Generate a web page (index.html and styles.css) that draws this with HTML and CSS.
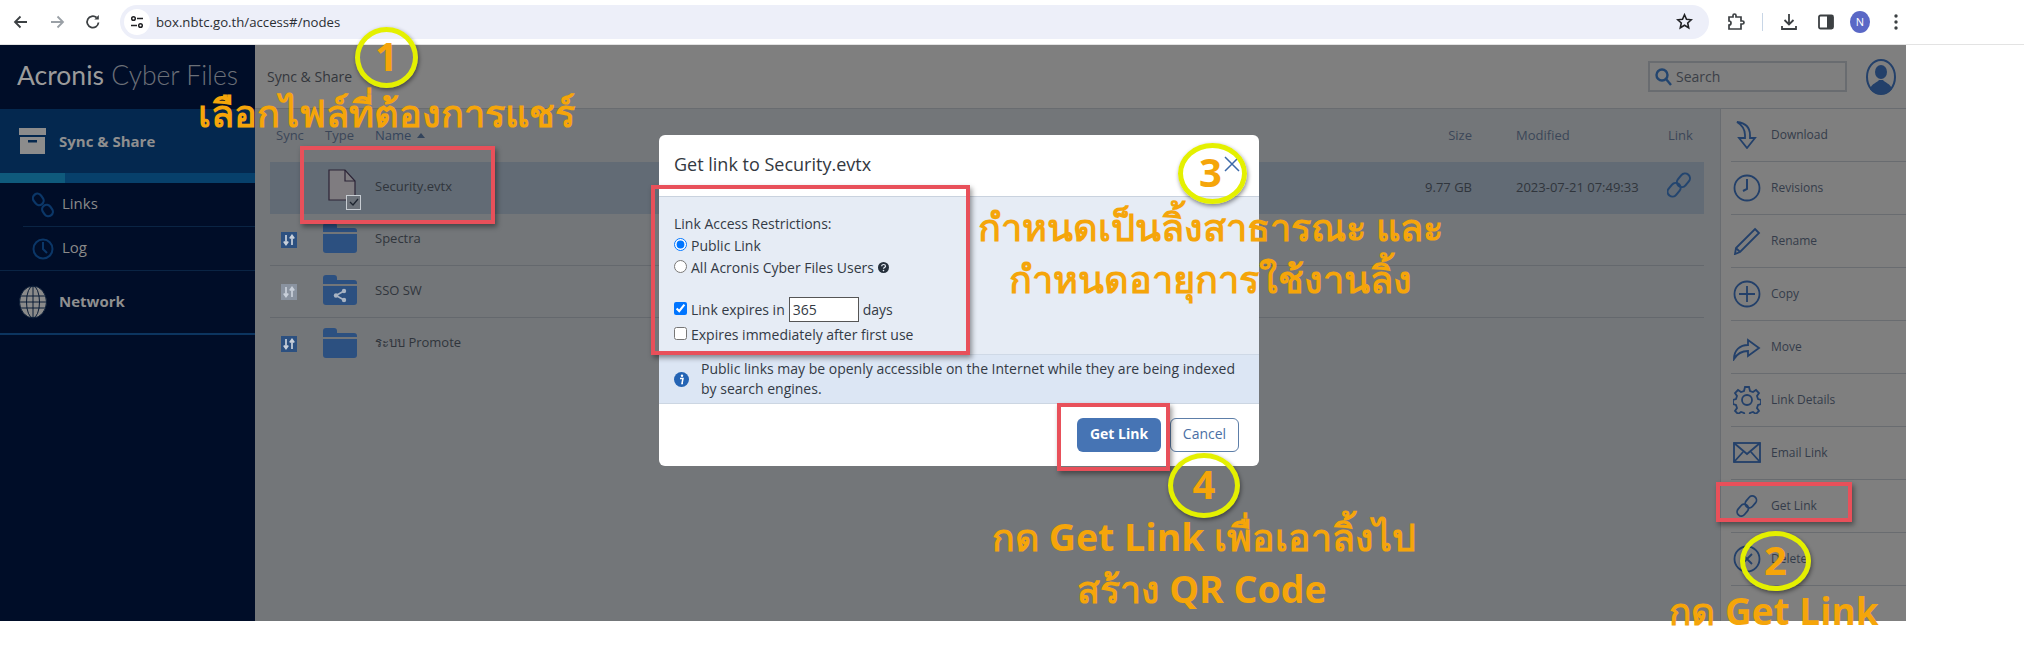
FILE: index.html
```html
<!DOCTYPE html>
<html lang="en">
<head>
    <meta charset="UTF-8">
    <title>Acronis Cyber Files</title>
    <link rel="stylesheet" href="styles.css">
</head>
<body>
    <svg class="defs" width="0" height="0">
        <symbol id="i-folder" viewBox="0 0 34 30">
            <path d="M0 3a3 3 0 0 1 3-3h8a3 3 0 0 1 3 3v2h17a3 3 0 0 1 3 3v1H0z" fill="#2c5080"/>
            <path d="M0 11h34v16a3 3 0 0 1-3 3H3a3 3 0 0 1-3-3z" fill="#2c5080"/>
        </symbol>
        <symbol id="i-sync" viewBox="0 0 16 16">
            <rect width="16" height="16" fill="currentColor"/>
            <path d="M5 3v9M2.800 9.500 5 12.500l2.200-3M11 13V4M8.800 6.500 11 3.500l2.200 3" fill="none" stroke="#c9d0da" stroke-width="1.700"/>
        </symbol>
        <symbol id="i-link" viewBox="0 0 26 30">
            <g fill="none" stroke="currentColor" stroke-width="2.200">
                <rect x="12.500" y="2" width="10.500" height="16" rx="5.200" transform="rotate(40 18 10)"/>
                <rect x="2.500" y="12" width="10.500" height="16" rx="5.200" transform="rotate(40 7.500 20)"/>
            </g>
        </symbol>
    </svg>

    <header class="browser">
        <div class="nav-btns">
            <svg width="16" height="16" viewBox="0 0 16 16" fill="none" stroke="#3c4043" stroke-width="1.800"><path d="M14 8H2M7.500 2.500 2 8l5.500 5.500"/></svg>
            <svg width="16" height="16" viewBox="0 0 16 16" fill="none" stroke="#9aa0a6" stroke-width="1.800"><path d="M2 8h12M8.500 2.500 14 8l-5.500 5.500"/></svg>
            <svg width="16" height="16" viewBox="0 0 16 16" fill="none" stroke="#3c4043" stroke-width="1.800"><path d="M13.500 8.500A5.700 5.700 0 1 1 11.500 3.500"/><path d="M13.800 1v4.500H9.300z" fill="#3c4043" stroke="none"/></svg>
        </div>
        <div class="omnibox">
            <span class="site-info">
                <svg width="14" height="14" viewBox="0 0 14 14" fill="none" stroke="#202124" stroke-width="1.500"><circle cx="3.500" cy="3.500" r="1.800"/><path d="M7 3.500h6M1 10.500h6"/><circle cx="10.500" cy="10.500" r="1.800"/></svg>
            </span>
            <span class="url">box.nbtc.go.th/access#/nodes</span>
            <svg class="star" width="17" height="17" viewBox="0 0 17 17" fill="none" stroke="#202124" stroke-width="1.600"><path d="m8.500 1.800 2 4.500 4.800.5-3.600 3.200 1 4.800-4.200-2.500-4.200 2.500 1-4.800L1.700 6.800l4.800-.5z"/></svg>
        </div>
        <div class="tools">
            <svg width="18" height="18" viewBox="0 0 18 18" fill="none" stroke="#3c4043" stroke-width="1.700"><path d="M2 4h4V2.500a1.500 1.500 0 0 1 3 0V4h5v4h1.500a1.500 1.500 0 0 1 0 3H14v5H2v-4a2 2 0 0 0 0-4z"/></svg>
            <span class="tool-sep"></span>
            <svg width="18" height="18" viewBox="0 0 18 18" fill="none" stroke="#3c4043" stroke-width="1.800"><path d="M9 1v10M4.500 7 9 11.500 13.500 7M2 13v3h14v-3"/></svg>
            <svg class="panel-btn" width="16" height="16" viewBox="0 0 16 16"><rect x="1" y="1.500" width="14" height="13" rx="1.500" fill="none" stroke="#3c4043" stroke-width="1.800"/><rect x="9" y="1.500" width="6" height="13" fill="#3c4043"/></svg>
            <span class="profile">N</span>
            <svg class="menu-btn" width="4" height="16" viewBox="0 0 4 16" fill="#3c4043"><circle cx="2" cy="2" r="1.700"/><circle cx="2" cy="8" r="1.700"/><circle cx="2" cy="14" r="1.700"/></svg>
        </div>
    </header>

    <div class="app">
        <aside class="sidebar">
            <div class="logo"><b>Acronis</b> Cyber Files</div>
            <div class="nav-main active">
                <svg width="27" height="27" viewBox="0 0 27 27" fill="#8c8c8c"><rect width="27" height="7"/><path d="M1 9h25v17H1z"/><rect x="9" y="12" width="9" height="2.500" fill="#05284e"/></svg>
                <span>Sync &amp; Share</span>
            </div>
            <div class="nav-strip"></div>
            <div class="nav-sub sub-line">
                <svg width="22" height="26" viewBox="0 0 22 26" fill="none" stroke="#0b3768" stroke-width="2.200"><rect x="1.500" y="1.500" width="9" height="12" rx="4.500" transform="rotate(-35 6 7)"/><rect x="11" y="12.500" width="9" height="12" rx="4.500" transform="rotate(-35 15.500 18.500)"/></svg>
                <span>Links</span>
            </div>
            <div class="nav-sub">
                <svg width="22" height="24" viewBox="0 0 22 24" fill="none" stroke="#0b3768" stroke-width="2"><circle cx="11" cy="12" r="9.500"/><path d="M11 5v7l4 4"/></svg>
                <span>Log</span>
            </div>
            <div class="nav-main network">
                <svg width="28" height="34" viewBox="0 0 28 34" fill="#8a8a8a" stroke="#0a1c36" stroke-width="1"><ellipse cx="14" cy="17" rx="13.500" ry="16"/><ellipse cx="14" cy="17" rx="6.500" ry="16" fill="none"/><path d="M14 1v32M1 11h26M1 23h26M.5 17h27" fill="none"/></svg>
                <span>Network</span>
            </div>
        </aside>

        <main class="content">
            <div class="topbar">
                <span class="crumb">Sync &amp; Share</span>
                <div class="search">
                    <svg width="17" height="18" viewBox="0 0 17 18" fill="none" stroke="#23456f" stroke-width="2.400"><circle cx="7" cy="7" r="5.500"/><path d="m11 11 5 6"/></svg>
                    <span>Search</span>
                </div>
                <svg class="user" width="30" height="36" viewBox="0 0 30 36"><ellipse cx="15" cy="18" rx="14" ry="17" fill="none" stroke="#23406a" stroke-width="2"/><ellipse cx="15" cy="13" rx="6" ry="7" fill="#23406a"/><path d="M4 30c2-6 7-6 9-9h4c2 3 7 3 9 9-3 4-7 5-11 5s-8-1-11-5z" fill="#23406a"/></svg>
            </div>
            <div class="workspace">
                <section class="files">
                    <div class="file-row file-head">
                        <span>Sync</span>
                        <span>Type</span>
                        <span class="name-head">Name <i class="sort-up"></i></span>
                        <span class="size">Size</span>
                        <span class="modified">Modified</span>
                        <span>Link</span>
                    </div>
                    <div class="file-row selected">
                        <span></span>
                        <span class="file-icon">
                            <svg width="40" height="42" viewBox="0 0 40 42"><path d="M7 1h16l10 11v19H7z" fill="#7f7c80" stroke="#2c2436" stroke-width="1.200"/><path d="M23 1v11h10" fill="none" stroke="#2c2436" stroke-width="1.200"/><rect x="24.500" y="26.500" width="14" height="14" fill="#6b7179" stroke="#c7ccd2"/><path d="m28 33 3 3 5-6" fill="none" stroke="#1e2530" stroke-width="1.300"/></svg>
                        </span>
                        <span>Security.evtx</span>
                        <span class="size">9.77 GB</span>
                        <span class="modified">2023-07-21 07:49:33</span>
                        <svg class="row-link" width="26" height="30"><use href="#i-link"/></svg>
                    </div>
                    <div class="file-row">
                        <svg class="badge" width="16" height="16"><use href="#i-sync"/></svg>
                        <svg class="folder" width="34" height="30"><use href="#i-folder"/></svg>
                        <span>Spectra</span>
                    </div>
                    <div class="file-row">
                        <svg class="badge off" width="16" height="16"><use href="#i-sync"/></svg>
                        <svg class="folder" width="34" height="30" viewBox="0 0 34 30">
                            <use href="#i-folder"/>
                            <path d="M21 16 13 20.500l8 4.500" fill="none" stroke="#a9b4c2" stroke-width="1.600"/>
                            <circle cx="21" cy="16" r="2.200" fill="#a9b4c2"/><circle cx="13" cy="20.500" r="2.200" fill="#a9b4c2"/><circle cx="21" cy="25" r="2.200" fill="#a9b4c2"/>
                        </svg>
                        <span>SSO SW</span>
                    </div>
                    <div class="file-row last">
                        <svg class="badge" width="16" height="16"><use href="#i-sync"/></svg>
                        <svg class="folder" width="34" height="30"><use href="#i-folder"/></svg>
                        <span>ระบบ Promote</span>
                    </div>
                </section>
                <nav class="actions">
                    <div class="action">
                        <svg width="28" height="28" viewBox="0 0 28 28" fill="none" stroke="#23406a" stroke-width="1.800"><path d="M4 1c8 1 13 5 13 13v3h5l-8 10-8-10h6v-3C12 9 9 4 4 1z"/></svg>
                        <span>Download</span>
                    </div>
                    <div class="action">
                        <svg width="28" height="28" viewBox="0 0 28 28" fill="none" stroke="#23406a" stroke-width="1.800"><circle cx="14" cy="14" r="12.500"/><path d="M14 5v10l-4 2" stroke-width="2"/></svg>
                        <span>Revisions</span>
                    </div>
                    <div class="action">
                        <svg width="28" height="28" viewBox="0 0 28 28" fill="none" stroke="#23406a" stroke-width="1.800"><path d="M22 2l4 4L7 25l-5 2 1-6zM3 21l4 4"/></svg>
                        <span>Rename</span>
                    </div>
                    <div class="action">
                        <svg width="28" height="28" viewBox="0 0 28 28" fill="none" stroke="#23406a" stroke-width="1.800"><circle cx="14" cy="14" r="12.500"/><path d="M14 6v16M6 14h16"/></svg>
                        <span>Copy</span>
                    </div>
                    <div class="action">
                        <svg width="28" height="28" viewBox="0 0 28 28" fill="none" stroke="#23406a" stroke-width="1.800"><path d="M1 26c0-9 6-14 14-14V7l11 8-11 8v-5c-7 0-11 3-14 8z"/></svg>
                        <span>Move</span>
                    </div>
                    <div class="action">
                        <svg width="28" height="28" viewBox="0 0 28 28" fill="none" stroke="#23406a" stroke-width="1.800"><circle cx="14" cy="14" r="5"/><path d="M12 1h4l1 4 3 1 3-2 3 3-2 3 1 3 3 1v4l-3 1-1 3 2 3-3 3-3-2-3 1-1 3h-4l-1-3-3-1-3 2-3-3 2-3-1-3-3-1v-4l3-1 1-3-2-3 3-3 3 2 3-1z"/></svg>
                        <span>Link Details</span>
                    </div>
                    <div class="action">
                        <svg width="28" height="22" viewBox="0 0 28 22" fill="none" stroke="#23406a" stroke-width="1.800"><rect x="1" y="1" width="26" height="19"/><path d="m1 1 13 11L27 1M1 20l9-10M27 20l-9-10"/></svg>
                        <span>Email Link</span>
                    </div>
                    <div class="action">
                        <svg class="action-link" width="22" height="24"><use href="#i-link"/></svg>
                        <span>Get Link</span>
                    </div>
                    <div class="action">
                        <svg width="28" height="28" viewBox="0 0 28 28" fill="none" stroke="#23406a" stroke-width="1.800"><circle cx="14" cy="14" r="12.500"/><path d="m9 9 10 10M19 9 9 19"/></svg>
                        <span>Delete</span>
                    </div>
                </nav>
            </div>
        </main>
    </div>

    <div class="dialog">
        <div class="dialog-head">
            <span>Get link to Security.evtx</span>
            <svg width="16" height="16" viewBox="0 0 16 16" stroke="#3d6aa8" stroke-width="1.500"><path d="m1 1 14 14M15 1 1 15"/></svg>
        </div>
        <div class="dialog-body">
            <div class="field-title">Link Access Restrictions:</div>
            <label class="opt"><input type="radio" name="access" checked> Public Link</label>
            <label class="opt"><input type="radio" name="access"> All Acronis Cyber Files Users
                <svg width="11" height="11" viewBox="0 0 11 11"><circle cx="5.500" cy="5.500" r="5.500" fill="#26303c"/><path d="M3.700 4.200c0-2.300 3.800-2.300 3.800 0 0 1.300-2 1.300-2 2.500" fill="none" stroke="#e6ecf5" stroke-width="1.200"/><circle cx="5.500" cy="8.600" r=".8" fill="#e6ecf5"/></svg>
            </label>
            <label class="opt expire"><input type="checkbox" checked> Link expires in <input class="days" type="text" value="365"> days</label>
            <label class="opt"><input type="checkbox"> Expires immediately after first use</label>
        </div>
        <div class="dialog-info">
            <svg width="15" height="15" viewBox="0 0 15 15"><circle cx="7.500" cy="7.500" r="7.500" fill="#2464b4"/><circle cx="8" cy="3.800" r="1.200" fill="#fff"/><path d="M6 6.500h3l-1 5h1" fill="none" stroke="#fff" stroke-width="1.500"/></svg>
            <p>Public links may be openly accessible on the Internet while they are being indexed by search engines.</p>
        </div>
        <div class="dialog-foot">
            <button class="btn-primary">Get Link</button>
            <button class="btn-cancel">Cancel</button>
        </div>
    </div>

    <!-- คำอธิบายที่วาดทับบนภาพ -->
    <div class="mark box-file"></div>
    <div class="mark box-action"></div>
    <div class="mark box-options"></div>
    <div class="mark box-button"></div>

    <div class="step step-1">1</div>
    <div class="step step-2">2</div>
    <div class="step step-3">3</div>
    <div class="step step-4">4</div>

    <div class="note note-pick">เลือกไฟล์ที่ต้องการแชร์</div>
    <div class="note note-public">กำหนดเป็นลิ้งสาธารณะ และ<br>กำหนดอายุการใช้งานลิ้ง</div>
    <div class="note note-qr">กด Get Link เพื่อเอาลิ้งไป<br>สร้าง QR Code</div>
    <div class="note note-get">กด Get Link</div>
</body>
</html>
```

FILE: styles.css
```css
html, body {
    margin: 0;
    height: 646px;
    overflow: hidden;
}
body {
    position: relative;
    background: #fff;
    font-family: "Open Sans", "Noto Sans", sans-serif;
    font-size: 12px;
    color: #333a45;
}
.defs {
    position: absolute;
}

/* browser bar */
.browser {
    display: flex;
    align-items: center;
    height: 45px;
    padding: 0 0 1px 13px;
    box-sizing: border-box;
    border-bottom: 1px solid #e3e3e3;
}
.nav-btns {
    display: flex;
    gap: 20px;
    width: 107px;
}
.omnibox {
    display: flex;
    align-items: center;
    width: 1589px;
    height: 34px;
    padding: 0 16px 0 4px;
    box-sizing: border-box;
    background: #edeff9;
    border-radius: 17px;
}
.site-info {
    display: flex;
    align-items: center;
    justify-content: center;
    width: 26px;
    height: 26px;
    background: #fff;
    border-radius: 50%;
}
.url {
    margin-left: 6px;
    flex: 1;
    font-size: 13.2px;
    color: #2b2e33;
}
.tools {
    display: flex;
    align-items: center;
    gap: 18px;
    margin-left: 18px;
}
.tool-sep {
    width: 1px;
    height: 18px;
    background: #c8d6e6;
    margin: 0 -1px;
}
.panel-btn {
    margin-left: 2px;
}
.profile {
    width: 20px;
    height: 22px;
    margin-left: -2px;
    border-radius: 50%;
    background: #5a68c6;
    color: #fff;
    font-size: 11px;
    line-height: 22px;
    text-align: center;
}
.menu-btn {
    margin-left: 6px;
}

/* app */
.app {
    display: flex;
    width: 1906px;
    height: 576px;
}
.sidebar {
    width: 255px;
    flex: none;
    background: #000d28;
    color: #8f8f8f;
}
.logo {
    height: 64px;
    padding-left: 17px;
    box-sizing: border-box;
    font-family: Lato, sans-serif;
    font-weight: 300;
    font-size: 26.5px;
    line-height: 60px;
    color: #6c7078;
}
.logo b {
    font-weight: 400;
    color: #9b9b9b;
}
.nav-main {
    display: flex;
    align-items: center;
    gap: 13px;
    padding-left: 19px;
    font-size: 15px;
    font-weight: 700;
}
.active {
    height: 64px;
    background: #04284f;
}
.nav-strip {
    height: 10px;
    background: linear-gradient(to right, #0f5a7c 65px, #07406b 65px);
}
.nav-sub {
    display: flex;
    align-items: center;
    gap: 8px;
    height: 43px;
    margin-left: 32px;
    font-size: 15px;
    color: #8a8a8a;
}
.nav-sub span {
    margin-bottom: 3px;
}
.sub-line {
    border-bottom: 1px solid #0a2444;
    margin-left: 23px;
    padding-left: 9px;
}
.network {
    height: 62px;
    border-top: 1px solid #0a2444;
    border-bottom: 2px solid #0c3560;
    gap: 12px;
}
.network span {
    margin-bottom: 2px;
}

.content {
    flex: 1;
    display: flex;
    flex-direction: column;
    background: #737679;
}
.topbar {
    display: flex;
    align-items: center;
    height: 64px;
    padding-left: 12px;
    box-sizing: border-box;
    background: #7f7f7f;
    border-bottom: 1px solid #696c70;
}
.crumb {
    flex: 1;
    font-size: 14px;
    color: #33363c;
}
.search {
    display: flex;
    align-items: center;
    gap: 4px;
    width: 199px;
    height: 31px;
    padding-left: 5px;
    box-sizing: border-box;
    border: 2px solid #696c70;
    font-size: 14px;
    color: #3b4047;
}
.user {
    margin: 0 10px 0 19px;
}
.workspace {
    flex: 1;
    display: flex;
}
.files {
    flex: 1;
    padding: 0 16px 0 15px;
}
.file-row {
    display: grid;
    grid-template-columns: 49px 50px 1fr 97px 196px 36px;
    align-items: center;
    height: 52px;
    padding-left: 6px;
    box-sizing: border-box;
    border-bottom: 1px solid #64686d;
    font-size: 13px;
    color: #30353c;
}
.file-row > span {
    margin-bottom: 4px;
}
.file-head {
    height: 53px;
    border-bottom: 0;
    color: #3b4658;
}
.file-head > span {
    margin-bottom: 2px;
}
.name-head {
    color: #33445c;
}
.sort-up {
    display: inline-block;
    margin-left: 2px;
    border: 4px solid transparent;
    border-top: 0;
    border-bottom: 5px solid #33445c;
    vertical-align: 2px;
}
.size {
    text-align: right;
}
.modified {
    padding-left: 44px;
}
.selected {
    background: #626b75;
    border-bottom: 0;
}
.selected .size,
.selected .modified {
    margin-bottom: 2px;
}
.last {
    border-bottom: 0;
}
.file-icon {
    display: flex;
    margin: 4px 0 0 -3px;
}
.file-row > .file-icon {
    margin-bottom: 0;
}
.row-link {
    width: 24px;
    height: 28px;
    margin: -6px 0 0 -1px;
    color: #23456f;
}
.badge {
    margin-left: 5px;
    color: #2c5080;
}
.badge.off {
    color: #8a93a0;
}
.folder {
    margin: -3px 0 0 -2px;
    display: block;
}
.actions {
    width: 186px;
    flex: none;
    background: #7f7f7f;
    border-left: 1px solid #696c70;
    box-sizing: border-box;
    padding-left: 10px;
    overflow: hidden;
}
.action {
    display: flex;
    align-items: center;
    gap: 10px;
    height: 53px;
    padding-left: 2px;
    box-sizing: border-box;
    border-bottom: 1px solid #696c70;
    color: #343c4a;
}
.action span {
    margin-bottom: 2px;
}
.action svg {
    width: 28px;
    flex: none;
}
.action .action-link {
    width: 22px;
    margin: 0 3px;
    color: #23406a;
}

/* modal */
.dialog {
    position: absolute;
    left: 659px;
    top: 135px;
    width: 600px;
    height: 331px;
    display: flex;
    flex-direction: column;
    background: #fff;
    border-radius: 6px;
    overflow: hidden;
}
.dialog-head {
    display: flex;
    align-items: center;
    justify-content: space-between;
    height: 62px;
    padding: 0 19px 4px 15px;
    box-sizing: border-box;
    font-size: 18px;
    color: #33383f;
    border-bottom: 1px solid #c9d2de;
}
.dialog-body {
    height: 158px;
    padding: 17px 15px 0;
    box-sizing: border-box;
    background: #e6ecf5;
    border-bottom: 1px solid #cfd9e6;
    font-size: 14px;
    color: #333a45;
}
.field-title {
    line-height: 20px;
}
.opt {
    display: flex;
    align-items: center;
    gap: 4px;
    height: 22px;
}
.opt input[type=radio],
.opt input[type=checkbox] {
    width: 13px;
    height: 13px;
    margin: 0 0 2px;
}
.expire {
    margin: 18px 0 1px;
    height: 26px;
}
.days {
    width: 70px;
    height: 25px;
    padding: 0 3px;
    box-sizing: border-box;
    border: 1px solid #555;
    font: 14px "Open Sans", sans-serif;
    color: #333a45;
}
.dialog-info {
    display: flex;
    align-items: center;
    gap: 12px;
    height: 49px;
    padding: 0 15px;
    box-sizing: border-box;
    background: #dce6f4;
    border-bottom: 1px solid #ccd6e2;
    font-size: 14px;
    line-height: 20px;
    color: #333a45;
}
.dialog-info svg {
    flex: none;
}
.dialog-info p {
    margin: 0;
}
.dialog-foot {
    flex: 1;
    display: flex;
    align-items: flex-start;
    justify-content: flex-end;
    gap: 9px;
    padding: 14px 20px 0 0;
}
.dialog-foot button {
    height: 34px;
    padding: 0 0 3px;
    border-radius: 6px;
    font-family: "Open Sans", sans-serif;
    font-size: 14px;
    cursor: pointer;
}
.btn-primary {
    width: 84px;
    background: #4674b4;
    border: 0;
    color: #fff;
    font-weight: 700;
}
.btn-cancel {
    width: 69px;
    background: #fff;
    border: 1px solid #5d7ea8;
    color: #4a6fa5;
}

/* annotations */
.mark {
    position: absolute;
    box-sizing: border-box;
    border: 4px solid #e8505a;
    box-shadow: 2px 3px 5px rgba(0, 0, 0, 0.4);
}
.box-file { left: 300px; top: 146px; width: 195px; height: 78px; }
.box-action { left: 1716px; top: 482px; width: 136px; height: 40px; }
.box-options { left: 651px; top: 185px; width: 319px; height: 170px; }
.box-button { left: 1057px; top: 403px; width: 113px; height: 68px; }

.step {
    position: absolute;
    box-sizing: border-box;
    display: flex;
    align-items: center;
    justify-content: center;
    padding-bottom: 4px;
    border: 5px solid #e4f000;
    border-radius: 50%;
    box-shadow: 1px 2px 4px rgba(0, 0, 0, 0.45);
    font-family: "Open Sans", sans-serif;
    font-size: 40px;
    font-weight: 700;
    color: #f5a50a;
}
.step-1 { left: 355px; top: 27px; width: 63px; height: 61px; }
.step-2 { left: 1740px; top: 531px; width: 71px; height: 60px; }
.step-3 { left: 1178px; top: 143px; width: 69px; height: 61px; justify-content: flex-start; padding-left: 16px; }
.step-4 { left: 1168px; top: 453px; width: 72px; height: 65px; }

.note {
    position: absolute;
    font-family: "Open Sans", "Noto Sans", sans-serif;
    font-size: 38px;
    font-weight: 700;
    line-height: 52px;
    text-align: center;
    white-space: nowrap;
    color: #f5a50a;
}
.note-pick { left: 197px; top: 86px; width: 378px; }
.note-public { left: 978px; top: 200px; width: 464px; }
.note-qr { left: 992px; top: 511px; width: 420px; font-size: 37.5px; }
.note-get { left: 1669px; top: 585px; width: 210px; font-size: 37px; }
```
